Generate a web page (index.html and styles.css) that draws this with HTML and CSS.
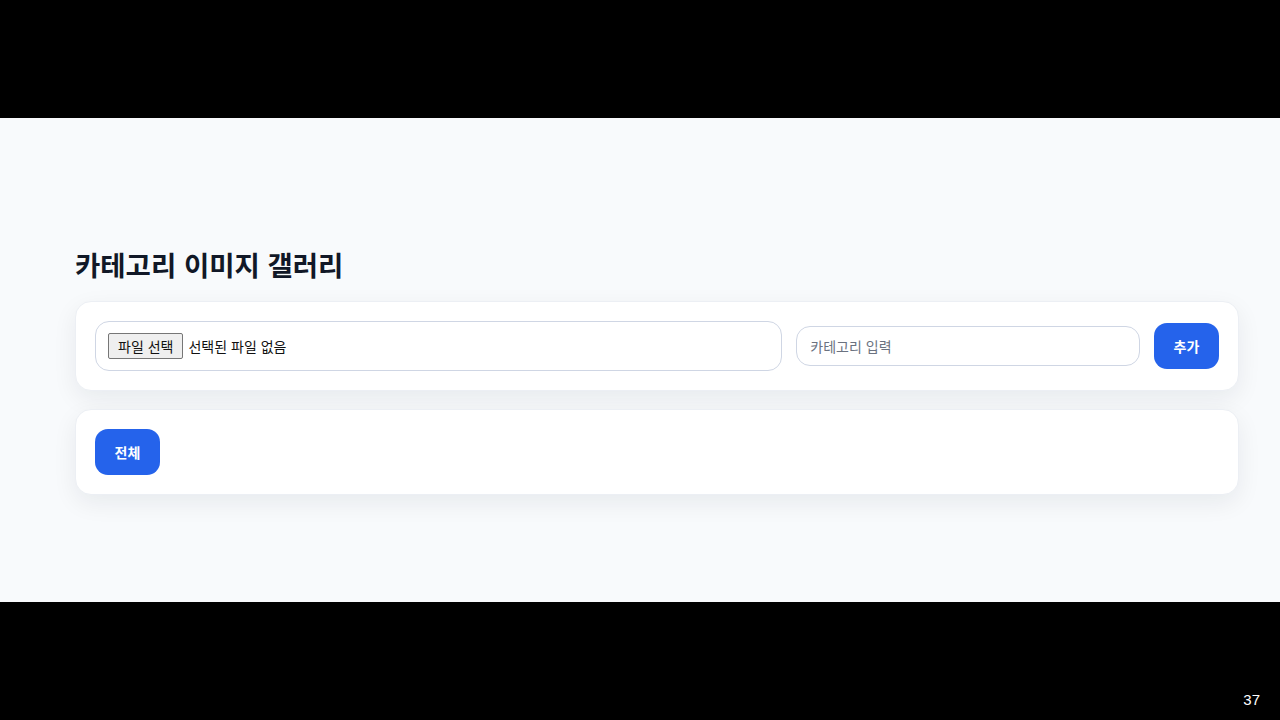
FILE: index.html
```html
<!DOCTYPE html>
<html lang="ko">
<head>
    <meta charset="UTF-8">
    <meta name="viewport" content="width=device-width, initial-scale=1.0">
    <title>카테고리 이미지 갤러리</title>
    <link rel="stylesheet" href="styles.css">
</head>
<body>
    <div class="frame">
        <div class="bar"></div>
        <main class="screen">
            <div class="container">
                <h1>카테고리 이미지 갤러리</h1>

                <section class="card upload">
                    <label class="file-box">
                        <input type="file" id="file" accept="image/*">
                        <span class="file-btn">파일 선택</span>
                        <span class="file-name" id="file-name">선택된 파일 없음</span>
                    </label>
                    <input type="text" class="category-input" id="category" placeholder="카테고리 입력">
                    <button class="btn" id="add-btn">추가</button>
                </section>

                <section class="card filters" id="filters">
                    <button class="btn">전체</button>
                </section>
            </div>
        </main>
        <div class="bar bottom">
            <span class="page-num">37</span>
        </div>
    </div>
</body>
</html>
```

FILE: styles.css
```css
* {
    margin: 0;
    padding: 0;
    box-sizing: border-box;
}

body {
    background-color: #000;
    font-family: "Noto Sans CJK KR", "Noto Sans", sans-serif;
}

.frame {
    width: 1280px;
    height: 720px;
    display: flex;
    flex-direction: column;
}

.bar {
    height: 118px;
    background-color: #000;
}

.bar.bottom {
    display: flex;
    justify-content: flex-end;
    align-items: flex-end;
    padding: 0 20px 12px 0;
}

.page-num {
    color: #fff;
    font-family: "Liberation Sans", Arial, sans-serif;
    font-size: 15px;
}

.screen {
    height: 484px;
    background-color: #f8fafc;
    padding: 129px 41px 0 75px;
}

h1 {
    font-size: 27.5px;
    line-height: 34px;
    font-weight: 700;
    color: #111827;
    margin-bottom: 20px;
}

.card {
    background-color: #fff;
    border: 1px solid #eceff4;
    border-radius: 16px;
    box-shadow: 0 8px 24px rgba(15, 23, 42, 0.07);
    padding: 19px;
}

.upload {
    display: grid;
    grid-template-columns: 2fr 1fr 65px;
    align-items: center;
    gap: 14px;
}

.filters {
    display: flex;
    align-items: center;
    gap: 10px;
}

.card + .card {
    margin-top: 18px;
}

.file-box {
    height: 50px;
    border: 1px solid #cfd6e4;
    border-radius: 14px;
    display: flex;
    align-items: center;
    padding: 0 12px;
    cursor: pointer;
}

.file-box input {
    display: none;
}

.file-btn {
    font-size: 14px;
    line-height: 24px;
    color: #111;
    background-color: #efefef;
    border: 1px solid #767676;
    border-radius: 2px;
    padding: 0 9px;
    margin-right: 5px;
}

.file-name {
    font-size: 14px;
    color: #111;
}

.category-input {
    width: 100%;
    height: 40px;
    border: 1px solid #cfd6e4;
    border-radius: 14px;
    padding: 0 13px;
    font-family: inherit;
    font-size: 14px;
    color: #111827;
    outline: none;
}

.category-input::placeholder {
    color: #6b7280;
}

.btn {
    width: 65px;
    height: 46px;
    border: none;
    border-radius: 13px;
    background-color: #2563eb;
    color: #fff;
    font-family: inherit;
    font-size: 14px;
    font-weight: 700;
    cursor: pointer;
}

.btn:hover {
    background-color: #1d4ed8;
}
```
